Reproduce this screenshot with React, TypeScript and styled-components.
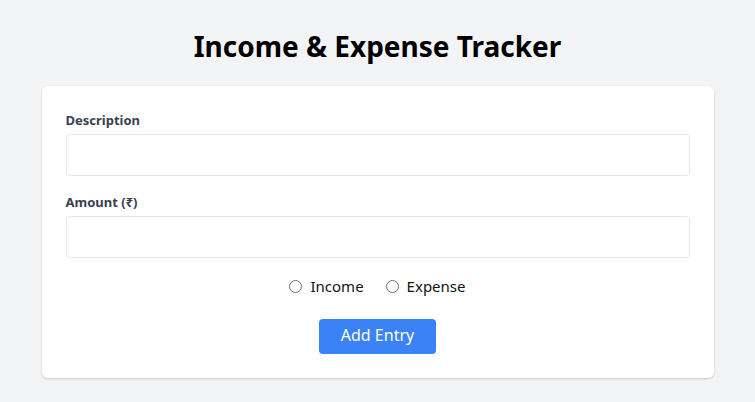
import React, { useState } from "react";
import styled, { createGlobalStyle } from "styled-components";

const Global = createGlobalStyle`
  html, body { margin: 0; padding: 0; background: #f3f4f6; }
  body { font-family: "Noto Sans", "Open Sans", "Liberation Sans", sans-serif; color: #000; }
  * { box-sizing: border-box; }
`;

const Page = styled.div`
  min-height: 402px;
  padding: 24px 0;
  display: flex;
  flex-direction: column;
  align-items: center;
`;

const Title = styled.h1`
  margin: 6px 0 24px;
  font-size: 28px;
  line-height: 32px;
  font-weight: 700;
  text-align: center;
`;

const Card = styled.form`
  width: 672px;
  background: #fff;
  border-radius: 6px;
  box-shadow: 0 1px 3px rgba(0, 0, 0, 0.12), 0 1px 2px rgba(0, 0, 0, 0.06);
  padding: 24px;
  display: flex;
  flex-direction: column;
`;

const Field = styled.div`
  display: flex;
  flex-direction: column;
  margin-bottom: 16px;
`;

const Label = styled.label`
  font-size: 13px;
  line-height: 20px;
  font-weight: 700;
  color: #374151;
  margin-bottom: 4px;
`;

const Input = styled.input`
  height: 42px;
  border: 1px solid #e5e7eb;
  border-radius: 4px;
  padding: 0 12px;
  font-size: 15px;
  font-family: inherit;
  outline: none;
`;

const RadioRow = styled.div`
  display: flex;
  justify-content: center;
  gap: 22px;
  height: 24px;
  align-items: center;
  margin-bottom: 21px;
`;

const RadioLabel = styled.label`
  display: flex;
  align-items: center;
  gap: 8px;
  font-size: 15px;
  color: #111;
`;

const Radio = styled.input`
  margin: 0;
  width: 13px;
  height: 13px;
`;

const Button = styled.button`
  align-self: center;
  width: 117px;
  height: 35px;
  padding: 0 0 3px;
  border: none;
  border-radius: 4px;
  background: #3b82f6;
  color: #fff;
  font-size: 16px;
  font-family: inherit;
`;

export default function App() {
  const [type, setType] = useState("");
  return (
    <>
      <Global />
      <Page>
        <Title>Income &amp; Expense Tracker</Title>
        <Card onSubmit={(e) => e.preventDefault()}>
          <Field>
            <Label>Description</Label>
            <Input type="text" />
          </Field>
          <Field>
            <Label>Amount (₹)</Label>
            <Input type="number" />
          </Field>
          <RadioRow>
            <RadioLabel>
              <Radio type="radio" name="t" checked={type === "income"} onChange={() => setType("income")} />
              Income
            </RadioLabel>
            <RadioLabel>
              <Radio type="radio" name="t" checked={type === "expense"} onChange={() => setType("expense")} />
              Expense
            </RadioLabel>
          </RadioRow>
          <Button type="submit">Add Entry</Button>
        </Card>
      </Page>
    </>
  );
}
